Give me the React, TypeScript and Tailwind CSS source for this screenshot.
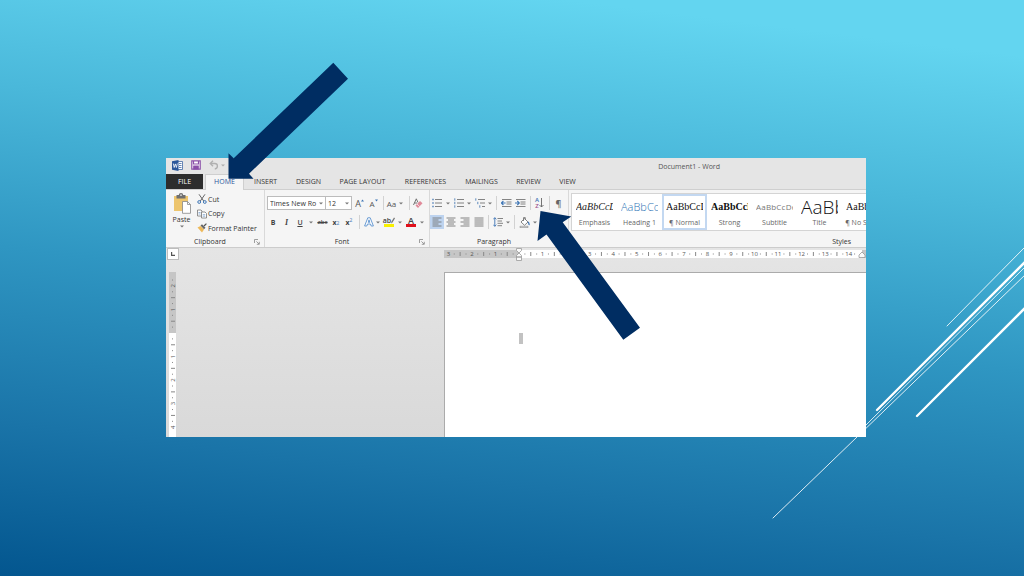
import type { ReactNode } from "react";
import clsx from "clsx";

const TABS = [
  { label: "INSERT", width: "w-[43px]" },
  { label: "DESIGN", width: "w-[43px]" },
  { label: "PAGE LAYOUT", width: "w-[65px]" },
  { label: "REFERENCES", width: "w-[61px]" },
  { label: "MAILINGS", width: "w-[51px]" },
  { label: "REVIEW", width: "w-[43px]" },
  { label: "VIEW", width: "w-[35px]" },
];

const STYLES = [
  { name: "Emphasis", sample: "AaBbCcDd", look: "font-['Liberation_Serif'] text-[10px] italic text-[#222]" },
  { name: "Heading 1", sample: "AaBbCcDd", look: "font-['Open_Sans'] text-[11px] font-light text-[#2e74b5]" },
  { name: "¶ Normal", sample: "AaBbCcDd", look: "font-['Liberation_Serif'] text-[10px] text-[#111]", active: true },
  { name: "Strong", sample: "AaBbCcDd", look: "font-['Liberation_Serif'] text-[10px] font-bold text-[#111]" },
  { name: "Subtitle", sample: "AaBbCcDd", look: "font-['Open_Sans'] text-[8px] tracking-wide text-[#777]" },
  { name: "Title", sample: "AaBb", look: "font-['Open_Sans'] text-[19px] font-light text-[#111]" },
  { name: "¶ No Spac...", sample: "AaBbCcDd", look: "font-['Liberation_Serif'] text-[10px] text-[#111]" },
];

const UNIT = 23.55;

function Tool({ label, width, active, children }: { label: string; width: string; active?: boolean; children: ReactNode }) {
  return (
    <button
      type="button"
      aria-label={label}
      className={clsx("flex h-3.5 shrink-0 items-center justify-center whitespace-nowrap", width, active && "bg-[#bdd3ef]")}
    >
      {children}
    </button>
  );
}

function CaretIcon() {
  return (
    <svg viewBox="0 0 4 3" className="h-[3px] w-1" fill="#777">
      <path d="M0 0.4h4L2 2.6z" />
    </svg>
  );
}

function Caret({ label, width = "w-2" }: { label: string; width?: string }) {
  return (
    <button type="button" aria-label={label} className={clsx("flex h-3.5 shrink-0 items-center justify-center", width)}>
      <CaretIcon />
    </button>
  );
}

function Divider({ width }: { width: string }) {
  return (
    <span className={clsx("flex h-3.5 shrink-0 justify-center", width)}>
      <span className="w-px bg-[#d2d2d2]" />
    </span>
  );
}

function Launcher({ label }: { label: string }) {
  return (
    <button type="button" aria-label={label} className="mr-1 flex w-1.5 items-center">
      <svg viewBox="0 0 6 6" className="size-1.5" fill="none" stroke="#888" strokeWidth="0.8">
        <path d="M0.5 4V0.5H4M2.4 2.4L5 5M5.3 2.8V5.3H2.8" />
      </svg>
    </button>
  );
}

function Group({ title, width, children }: { title: string; width: string; children: ReactNode }) {
  return (
    <section aria-label={title} className={clsx("flex shrink-0 flex-col border-r border-[#d9d9d9]", width)}>
      <div className="h-[47px]">{children}</div>
      <div className="flex h-[9px] items-center">
        <span className="flex-1 text-center leading-[9px]">{title}</span>
        <Launcher label={`${title} settings`} />
      </div>
    </section>
  );
}

function Lines({ d }: { d: string }) {
  return (
    <svg viewBox="0 0 10 10" className="size-2.5" fill="none" stroke="#777" strokeWidth="0.9">
      <path d={d} />
    </svg>
  );
}

function ListIcon({ kind }: { kind: "bullets" | "numbers" | "levels" }) {
  const step = kind === "levels" ? 2 : 0;
  return (
    <svg viewBox="0 0 10 10" className="size-2.5" fill="none" strokeWidth="0.9">
      {[0, 1, 2].map((row) => (
        <g key={row}>
          <path
            d={kind === "bullets" ? `M${0.3} ${1.5 + row * 3.5}h1.4` : `M${0.8 + row * step} ${0.3 + row * 3.5}v2.4`}
            stroke="#4e7fb8"
            strokeWidth={kind === "bullets" ? 1.4 : 0.9}
          />
          <path d={`M${3 + row * step} ${1.5 + row * 3.5}H10`} stroke="#777" />
        </g>
      ))}
    </svg>
  );
}

function IndentIcon({ flip }: { flip?: boolean }) {
  return (
    <svg viewBox="0 0 11 10" className="h-2.5 w-[11px]" fill="none">
      <path d="M1 1.5h9.5M5.5 4h5M5.5 6h5M1 8.5h9.5" stroke="#777" strokeWidth="0.9" />
      <path d={flip ? "M0 5h4M2.3 3l2 2-2 2" : "M0.6 5h4M2.4 3l-2 2 2 2"} stroke="#3f76b5" strokeWidth="1.1" />
    </svg>
  );
}

function Clipboard() {
  return (
    <Group title="Clipboard" width="w-[99px]">
      <div className="flex pt-0.5">
        <button type="button" className="flex w-[31px] flex-col items-center pt-px">
          <svg viewBox="0 0 18 21" className="h-[21px] w-[18px]">
            <path d="M1 3h14v15H1z" fill="#edc56d" />
            <path d="M3.5 2h2.3a2.2 2 0 0 1 4.4 0h2.3v3.4h-9z" fill="#6f6f6f" />
            <path d="M7.2 1.6h1.6v1.2H7.2z" fill="#f4f4f4" />
            <path d="M9.5 8.5h5l3 3v8.8h-8z" fill="#fff" stroke="#888" strokeWidth="0.8" />
            <path d="M14.5 8.5v3h3" fill="none" stroke="#888" strokeWidth="0.8" />
          </svg>
          <span className="leading-[11px]">Paste</span>
          <CaretIcon />
        </button>
        <div className="flex flex-col items-start">
          <button type="button" className="flex h-[14px] items-center gap-px">
            <svg viewBox="0 0 10 10" className="size-2.5" fill="none" strokeWidth="1">
              <path d="M2 0.3L6.7 7M8 0.3L3.3 7" stroke="#666" />
              <circle cx="2.2" cy="8" r="1.4" stroke="#3f76b5" />
              <circle cx="7.8" cy="8" r="1.4" stroke="#3f76b5" />
            </svg>
            Cut
          </button>
          <button type="button" className="flex h-[15px] items-center gap-px">
            <svg viewBox="0 0 10 10" className="size-2.5" fill="#fff" stroke="#777" strokeWidth="0.8">
              <path d="M0.5 1h3.5l1 1v5H0.5z" />
              <path d="M4.5 3h3.5l1.5 1.5V9h-5z" />
              <path d="M1.5 3.5h2M1.5 5h2M5.7 5.7h2.5M5.7 7.2h2.5" stroke="#4e7fb8" strokeWidth="0.6" />
            </svg>
            Copy
          </button>
          <button type="button" className="flex h-[14px] items-center gap-px whitespace-nowrap">
            <svg viewBox="0 0 10 10" className="size-2.5">
              <path d="M0.5 4.5l3-1.5L7 6.5 5 9.5z" fill="#edb95a" />
              <path d="M3.5 2.5l1.5-1.3 3.5 3.5L7 6.2z" fill="#666" />
              <path d="M6.5 2.5L9 0.3l0.8 0.8-2.3 2.5z" fill="#555" />
            </svg>
            Format Painter
          </button>
        </div>
      </div>
    </Group>
  );
}

function FontGroup() {
  return (
    <Group title="Font" width="w-[165px]">
      <div className="flex items-center pl-0.5 pt-1.5">
        <label className="flex h-3.5 w-[59px] shrink-0 items-center border border-[#bcbcbc] bg-white">
          <select aria-label="Font name" className="w-[51px] appearance-none overflow-hidden whitespace-nowrap pl-0.5 outline-none">
            <option>Times New Ro</option>
          </select>
          <CaretIcon />
        </label>
        <label className="flex h-3.5 w-[26px] shrink-0 items-center border border-l-0 border-[#bcbcbc] bg-white">
          <select aria-label="Font size" className="w-[19px] appearance-none pl-0.5 outline-none">
            <option>12</option>
          </select>
          <CaretIcon />
        </label>
        <Tool label="Grow font" width="w-[15px]">
          <span className="text-[9px] text-[#555]">A</span>
          <svg viewBox="0 0 3 8" className="h-2 w-[3px]" fill="#3f76b5"><path d="M0 2.5L1.5 0.5 3 2.5z" /></svg>
        </Tool>
        <Tool label="Shrink font" width="w-[13px]">
          <span className="text-[8px] text-[#555]">A</span>
          <svg viewBox="0 0 3 8" className="h-2 w-[3px]" fill="#3f76b5"><path d="M0 0.5h3L1.5 2.5z" /></svg>
        </Tool>
        <Divider width="w-1.5" />
        <Tool label="Change case" width="w-[11px]"><span className="text-[8px] text-[#555]">Aa</span></Tool>
        <Caret label="Case options" />
        <Divider width="w-2" />
        <Tool label="Clear formatting" width="w-2.5">
          <svg viewBox="0 0 10 11" className="h-[11px] w-2.5" fill="none">
            <path d="M0.5 7L3.3 0.8 5 4.5M1.5 5h2.5" stroke="#666" strokeWidth="0.9" />
            <path d="M2.5 7.5L7 3l2.5 2.3L5 10z" fill="#e08a9a" />
            <path d="M4 6l2.5 2.4" stroke="#fff" strokeWidth="0.7" />
          </svg>
        </Tool>
      </div>
      <div className="flex items-center pl-0.5 pt-[5px] text-[#444]">
        <Tool label="Bold" width="w-3"><b>B</b></Tool>
        <Tool label="Italic" width="w-[15px]"><i className="font-['Liberation_Serif'] text-[8px] font-bold">I</i></Tool>
        <Tool label="Underline" width="w-3"><span className="font-semibold underline">U</span></Tool>
        <Caret label="Underline options" width="w-2.5" />
        <Tool label="Strikethrough" width="w-[13px]"><s className="text-[6px] font-semibold">abc</s></Tool>
        <Tool label="Subscript" width="w-3.5"><b>x</b><sub className="text-[5px] text-[#3f76b5]">2</sub></Tool>
        <Tool label="Superscript" width="w-3"><b>x</b><sup className="text-[5px] text-[#3f76b5]">2</sup></Tool>
        <Divider width="w-2" />
        <Tool label="Text effects" width="w-[11px]">
          <svg viewBox="0 0 10 10" className="size-2.5" fill="#fff" stroke="#5b92cf" strokeWidth="0.9" strokeLinejoin="round">
            <path d="M0.6 9L3.8 0.8h2.4L9.4 9H7.2L6.5 7H3.5L2.8 9zM4.2 5.3h1.6L5 2.8z" />
          </svg>
        </Tool>
        <Caret label="Effect options" />
        <Tool label="Highlight" width="w-3.5">
          <span className="flex flex-col items-center">
            <span className="flex h-[7px] items-center text-[7px] font-semibold leading-[7px]">
              ab
              <svg viewBox="0 0 4 7" className="h-[7px] w-1"><path d="M0 6.5l0.5-2L3 0.5l1 0.7L1.5 5.5z" fill="#777" /></svg>
            </span>
            <span className="h-[3px] w-2.5 bg-[#f8f000]" />
          </span>
        </Tool>
        <Caret label="Highlight colors" />
        <Tool label="Font color" width="w-3.5">
          <span className="flex flex-col items-center">
            <span className="text-[9px] font-semibold leading-[7px]">A</span>
            <span className="h-[3px] w-2.5 bg-[#e0101c]" />
          </span>
        </Tool>
        <Caret label="Font colors" width="w-[7px]" />
      </div>
    </Group>
  );
}

function Paragraph() {
  return (
    <Group title="Paragraph" width="w-[139px]">
      <div className="flex items-center pt-1.5">
        <Tool label="Bullets" width="w-3.5"><ListIcon kind="bullets" /></Tool>
        <Caret label="Bullet options" />
        <Tool label="Numbering" width="w-[13px]"><ListIcon kind="numbers" /></Tool>
        <Caret label="Numbering options" />
        <Tool label="Multilevel list" width="w-3.5"><ListIcon kind="levels" /></Tool>
        <Caret label="Multilevel options" width="w-1.5" />
        <Divider width="w-[7px]" />
        <Tool label="Decrease indent" width="w-[13px]"><IndentIcon /></Tool>
        <Tool label="Increase indent" width="w-3.5"><IndentIcon flip /></Tool>
        <Divider width="w-1.5" />
        <Tool label="Sort" width="w-[13px]">
          <span className="flex flex-col text-[6px] font-semibold leading-[6px]">
            <span className="text-[#3f76b5]">A</span>
            <span className="text-[#a0528f]">Z</span>
          </span>
          <svg viewBox="0 0 5 10" className="h-2.5 w-[5px]" fill="none" stroke="#666" strokeWidth="0.9"><path d="M2.5 0v9M0.5 7l2 2 2-2" /></svg>
        </Tool>
        <Divider width="w-[7px]" />
        <Tool label="Show marks" width="w-[11px]"><span className="text-[9px] font-semibold text-[#666]">¶</span></Tool>
      </div>
      <div className="flex items-center pt-[5px]">
        <Tool label="Align left" width="w-3.5" active><Lines d="M0.5 1h9M0.5 3h6M0.5 5h9M0.5 7h6M0.5 9h9" /></Tool>
        <Tool label="Center" width="w-3.5"><Lines d="M0.5 1h9M2 3h6M0.5 5h9M2 7h6M0.5 9h9" /></Tool>
        <Tool label="Align right" width="w-3.5"><Lines d="M0.5 1h9M3.5 3h6M0.5 5h9M3.5 7h6M0.5 9h9" /></Tool>
        <Tool label="Justify" width="w-[13px]"><Lines d="M0.5 1h9M0.5 3h9M0.5 5h9M0.5 7h9M0.5 9h9" /></Tool>
        <Divider width="w-1.5" />
        <Tool label="Line spacing" width="w-[13px]">
          <svg viewBox="0 0 10 10" className="size-2.5" fill="none">
            <path d="M4.5 1.5H10M4.5 4H9M4.5 6.3H10M4.5 8.7H9" stroke="#777" strokeWidth="0.9" />
            <path d="M1.8 0.7v8.6M0.3 2.3l1.5-1.6 1.5 1.6M0.3 7.7l1.5 1.6 1.5-1.6" stroke="#3f76b5" strokeWidth="0.9" />
          </svg>
        </Tool>
        <Caret label="Spacing options" width="w-[7px]" />
        <Divider width="w-[7px]" />
        <Tool label="Shading" width="w-[13px]">
          <svg viewBox="0 0 11 11" className="size-[11px]" fill="none" stroke="#777" strokeWidth="0.9">
            <path d="M2 5l3.5-3.5L9 5 5.5 8.3z" fill="#fff" />
            <path d="M4.5 4V0.6h1.8V3" />
            <path d="M9 5c1 1 1.3 2 1 3.2" stroke="#3f76b5" strokeWidth="1.2" />
            <path d="M1 9.3h8v1.3H1z" fill="#fff" strokeWidth="0.6" />
          </svg>
        </Tool>
        <Caret label="Shading colors" />
      </div>
    </Group>
  );
}

function StylesGroup() {
  return (
    <section aria-label="Styles" className="flex min-w-0 flex-1 flex-col pl-0.5">
      <div className="h-[47px] pt-[3px]">
        <div className="flex h-[38px] overflow-hidden border border-r-0 border-[#d4d4d4] bg-white">
          {STYLES.map((style) => (
            <button
              key={style.name}
              type="button"
              className={clsx(
                "flex w-[45px] shrink-0 flex-col items-center border-2",
                style.active ? "border-[#c3d8f1]" : "border-transparent"
              )}
            >
              <span className={clsx("flex h-[22px] w-[37px] items-center overflow-hidden whitespace-nowrap leading-[22px]", style.look)}>
                {style.sample}
              </span>
              <span className="whitespace-nowrap leading-[9px] text-[#666]">{style.name}</span>
            </button>
          ))}
        </div>
      </div>
      <span className="pr-[15px] text-right leading-[9px]">Styles</span>
    </section>
  );
}

function HorizontalRuler() {
  const marks = Array.from({ length: 72 }, (_, i) => i - 12);
  return (
    <svg className="h-[13px] w-full" fontSize="6" fill="#555" textAnchor="middle">
      <rect x="0" y="2" width="75" height="8" fill="#c6c6c6" />
      <rect x="75" y="2" width="343" height="8" fill="#fff" />
      <rect x="418" y="2" width="100%" height="8" fill="#c6c6c6" />
      {marks.map((n) => {
        const x = 75 + (n * UNIT) / 4;
        if (x < 3 || x > 416 || n === 0) return null;
        if (n % 4 === 0) return <text key={n} x={x} y="8">{Math.abs(n / 4)}</text>;
        return <rect key={n} x={x - 0.5} y={n % 2 === 0 ? 4 : 5.5} width="1" height={n % 2 === 0 ? 4 : 1} fill="#888" />;
      })}
      <g fill="#fafafa" stroke="#999" strokeWidth="0.8">
        <path d="M72.5 0.5h5v2L75 5l-2.5-2.5zM75 5l2.5 2.5v1.5h-5V7.5zM72.5 9h5v3.5h-5z" />
        <path d="M418 4l3 3v2.5h-6V7z" />
      </g>
    </svg>
  );
}

function VerticalRuler() {
  const marks = Array.from({ length: 26 }, (_, i) => i - 9);
  return (
    <svg className="h-full w-[7px] shrink-0" fontSize="6" fill="#555" textAnchor="middle">
      <rect width="7" height="100%" fill="#fff" />
      <rect width="7" height="61" fill="#c6c6c6" />
      {marks.map((n) => {
        const y = 61 + (n * UNIT) / 4;
        if (n === 0) return null;
        if (n % 4 === 0) return <text key={n} transform={`translate(6 ${y}) rotate(-90)`}>{Math.abs(n / 4)}</text>;
        return <rect key={n} x={n % 2 === 0 ? 2 : 3} y={y - 0.5} width={n % 2 === 0 ? 4 : 1} height="1" fill="#888" />;
      })}
    </svg>
  );
}

function WordWindow() {
  return (
    <div className="relative flex min-w-0 flex-1 flex-col overflow-hidden bg-[#e5e5e5] font-['Open_Sans',sans-serif] text-[7px] leading-[9px] text-[#333]">
      {/* Title bar */}
      <header className="flex h-4 items-center pl-1.5">
        <div className="flex w-[60px] items-center gap-2 pb-0.5">
          <svg viewBox="0 0 11 11" className="size-[11px]">
            <path d="M5 1.5h5.5v8H5z" fill="#fff" stroke="#2b579a" strokeWidth="0.7" />
            <path d="M7 3.5h2.5M7 5.5h2.5M7 7.5h2.5" stroke="#2b579a" strokeWidth="0.7" />
            <path d="M0 1.3L6.500 0v11L0 9.700z" fill="#2b579a" />
            <path d="M1.300 3.500l0.900 4 1.100-3.600 1.100 3.600 0.900-4" fill="none" stroke="#fff" strokeWidth="0.8" />
          </svg>
          <button type="button" aria-label="Save">
            <svg viewBox="0 0 10 10" className="size-2.5" fill="none" stroke="#8a4fa8" strokeWidth="1.2">
              <path d="M0.8 0.8h8.4v8.4H0.8z" fill="#fff" />
              <path d="M2.5 1v3h5V1" />
              <path d="M2.8 6h4.4v3H2.8z" fill="#8a4fa8" />
            </svg>
          </button>
          <button type="button" aria-label="Undo">
            <svg viewBox="0 0 10 10" className="size-2.5" fill="none" stroke="#b0b0b0" strokeWidth="1.3">
              <path d="M4 0.8L1.2 3.5 4 6.2M1.5 3.5h4.3c3.5 0 3.5 5 0 5.5" />
            </svg>
          </button>
          <span className="-ml-1.5 opacity-50"><CaretIcon /></span>
        </div>
        <h1 className="flex-1 pr-[146px] text-right text-[#555]">Document1 - Word</h1>
      </header>

      {/* Ribbon tabs */}
      <nav className="flex h-4 border-b border-[#cfcfcf]">
        <button type="button" className="w-[37px] shrink-0 bg-[#2d2d2d] text-white">FILE</button>
        <button type="button" className="-mb-px ml-0.5 w-[39px] shrink-0 border border-b-0 border-[#cfcfcf] bg-[#f5f5f5] pb-0.5 text-[#2b579a]">HOME</button>
        {TABS.map((tab) => (
          <button key={tab.label} type="button" className={clsx("shrink-0 whitespace-nowrap", tab.width)}>
            {tab.label}
          </button>
        ))}
      </nav>

      <div className="flex h-[58px] border-b border-[#cccccc] bg-[#f5f5f5]">
        <Clipboard />
        <FontGroup />
        <Paragraph />
        <StylesGroup />
      </div>

      {/* Document area */}
      <div className="flex flex-1 flex-col bg-linear-to-b from-[#e5e5e5] to-[#d9d9d9]">
        <div className="flex">
          <button type="button" aria-label="Tab selector" className="ml-px flex size-3 shrink-0 items-center justify-center border border-[#bdbdbd] bg-white">
            <svg viewBox="0 0 4 4" className="size-1" fill="none" stroke="#555" strokeWidth="1.2"><path d="M0.6 0v3.4H4" /></svg>
          </button>
          <div className="ml-[265px] min-w-0 flex-1">
            <HorizontalRuler />
          </div>
        </div>
        <div className="flex flex-1 pl-[3px] pt-[11px]">
          <VerticalRuler />
          <article aria-label="Document" className="ml-[268px] flex-1 border-l border-t border-[#ababab] bg-white pl-[74px] pt-[60px]">
            <span className="block h-[11px] w-1 bg-[#c2c2c2]" />
          </article>
        </div>
      </div>
    </div>
  );
}

export default function App() {
  return (
    <main className="relative flex min-h-screen overflow-hidden bg-[linear-gradient(187deg,#63d5f0_8%,#4ab8da_30%,#2f96c2_53%,#1a74a8_78%,#03568f_100%)] pb-[139px] pl-[166px] pr-[158px] pt-[158px]">
      <svg viewBox="0 0 1024 576" preserveAspectRatio="xMaxYMax slice" className="absolute inset-0 size-full" stroke="#fff" strokeLinecap="round">
        <path d="M947 326L1026 246M860 431L1026 266M773 518L1026 274" strokeWidth="1" opacity="0.85" />
        <path d="M877 410L1026 261M917 416L1026 307" strokeWidth="2.3" />
      </svg>
      <WordWindow />
      {/* Callout arrows */}
      <svg viewBox="0 0 1024 576" preserveAspectRatio="xMinYMin meet" className="pointer-events-none absolute inset-0 size-full" fill="#002d62">
        <path d="M333.3 62.7L348 78.7 249 173.7l4.5 5H228.5V153.3l5.2 5z" />
        <path d="M540.5 211L571.3 216.5l-8.6 5.8L640 327.7l-16.7 12L546.5 234.5l-9 6.5z" />
      </svg>
    </main>
  );
}
